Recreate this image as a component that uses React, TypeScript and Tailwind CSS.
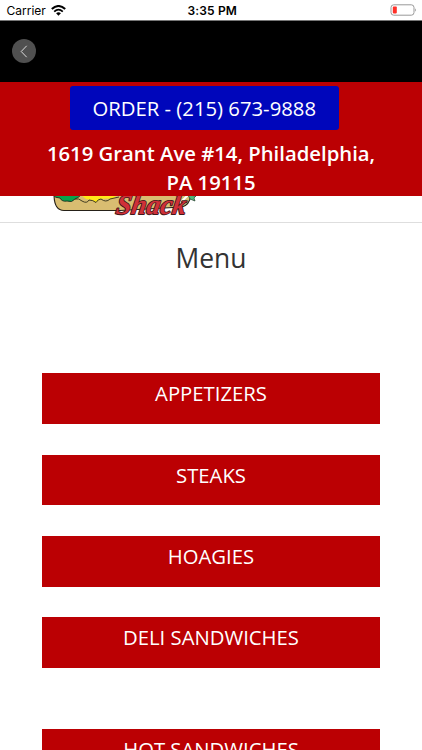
const groups = [
  { items: ['APPETIZERS', 'STEAKS', 'HOAGIES', 'DELI SANDWICHES'] },
  { items: ['HOT SANDWICHES'] },
];

function StatusBar() {
  return (
    <div className="flex h-[21px] shrink-0 items-center justify-between border-b border-[#777] bg-white pl-[6.5px] pr-[4px] font-[Inter,sans-serif] text-[12px] text-black">
      <div className="flex w-[120px] items-center gap-[5.5px] pt-[2px]">
        <span className="tracking-[0px]">Carrier</span>
        <svg className="-mt-[2px]" width="15" height="11" viewBox="0 0 15 11" fill="none" stroke="#000">
          <path d="M.8 4.1Q7.5 -2.1 14.2 4.1" strokeWidth="2" />
          <path d="M3.2 6.6Q7.5 2.7 11.8 6.6" strokeWidth="1.8" />
          <path d="M5.1 8.3Q7.5 6.3 9.9 8.3L7.5 10.7Z" fill="#000" stroke="none" />
        </svg>
      </div>
      <span className="pt-[2px] font-semibold tracking-[0.15px]">3:35 PM</span>
      <div className="flex w-[120px] justify-end">
        <svg width="28" height="12" viewBox="0 0 28 12">
          <rect x="1" y=".8" width="23" height="10.4" rx="2.7" fill="#fff" stroke="#999" />
          <rect x="2.8" y="2.6" width="4" height="6.8" rx=".8" fill="#ff3028" />
          <path d="M25.2 4.2Q27 6 25.2 7.8Z" fill="#888" />
        </svg>
      </div>
    </div>
  );
}

function Logo() {
  return (
    <svg className="ml-[48px] block" width="152" height="26" viewBox="48 196 152 26">
      <path d="M54 194C54 204 57 210.5 64 210.5H120L182 207Q190 205 191 194Z" fill="#d9bd71" stroke="#252018" strokeWidth="1.1" />
      <path d="M53 195Q55 198 60 198Q62 202 67 201Q72 203 75 199Q78 198 81 195Z" fill="#08a34c" stroke="#202820" strokeWidth=".9" />
      <path d="M81 195L86 199L92 200L96 202.5L100 199Q106 198 113 199L117 195Z" fill="#ffe719" stroke="none" />
      <path d="M75 199Q79 198 82 201Q87 204 89 200Q93 200 96 202.5Q98 199 101 199Q106 203 110 199L119 197" fill="none" stroke="#302c18" strokeWidth=".9" />
      <path d="M180 203L188 195" stroke="#fff" strokeWidth="2" />
      <path d="M188 195L196 196L194 198L195 201L190 199Z" fill="#4db879" stroke="#243c2c" strokeWidth=".7" />
      <text x="0" y="0" transform="translate(115 214) skewX(-9)" textLength="70" lengthAdjust="spacingAndGlyphs" fontFamily="Liberation Serif, serif" fontSize="28" fontWeight="700" fontStyle="italic" fill="#cf3038" stroke="#40181b" strokeWidth="1.8" paintOrder="stroke" strokeLinejoin="round">Shack</text>
    </svg>
  );
}

export default function App() {
  return (
    <div className="flex h-[750px] w-[422px] flex-col overflow-hidden bg-white font-['Open_Sans',sans-serif]">
      <StatusBar />
      <div className="h-[61px] shrink-0 bg-black pl-[11.5px] pt-[18px]">
        <button aria-label="Back" className="flex size-[24px] items-center justify-center rounded-full bg-[#505050]">
          <svg width="8" height="13" viewBox="0 0 8 13" fill="none" stroke="#ddd" strokeWidth="1">
            <path d="M6.7 .8L1.2 6.5L6.7 12.2" />
          </svg>
        </button>
      </div>
      <header className="flex h-[114px] shrink-0 flex-col items-center bg-[#bb0003] pt-[4px] text-white">
        <a className="mr-[13.5px] flex h-[44.5px] w-[269px] items-center justify-center rounded-[3px] bg-[#0006bb] text-[20.3px]">ORDER - (215) 673-9888</a>
        <p className="mt-[9.5px] w-[350px] text-center text-[20.3px] font-semibold leading-[28.5px]">1619 Grant Ave #14, Philadelphia, PA 19115</p>
      </header>
      <div className="h-[27px] shrink-0 overflow-hidden border-b border-[#dedede]">
        <Logo />
      </div>
      <main className="flex flex-col">
        <h1 className="mt-[17px] text-center text-[26.4px] leading-[36px] text-[#333]">Menu</h1>
        <div className="mt-[97.3px] flex flex-col gap-[61.2px]">
          {groups.map((group) => (
            <div key={group.items[0]} className="flex flex-col gap-[30.7px] px-[42.3px]">
              {group.items.map((item) => (
                <a key={item} className="block h-[50.7px] bg-[#bb0003] pt-[6px] text-center text-[20.3px] leading-[28px] text-white">{item}</a>
              ))}
            </div>
          ))}
        </div>
      </main>
    </div>
  );
}
